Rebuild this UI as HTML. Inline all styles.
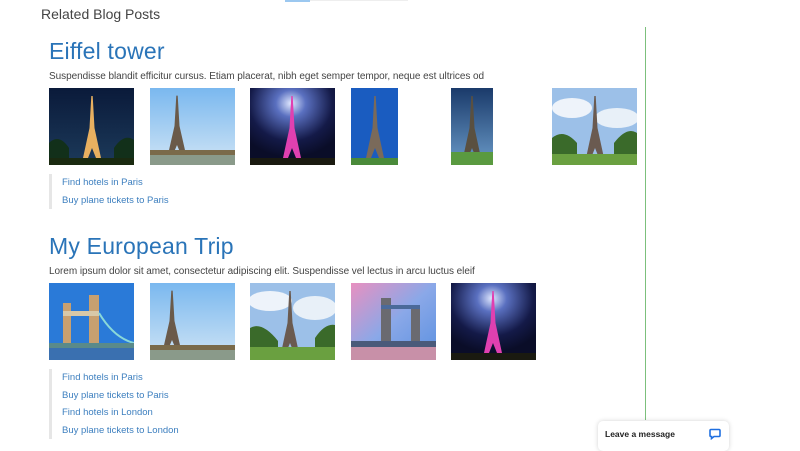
<!DOCTYPE html>
<html><head><meta charset="utf-8"><style>
*{margin:0;padding:0;box-sizing:border-box}
body{width:800px;height:445px;overflow:hidden;background:#fff;font-family:"Liberation Sans",sans-serif;position:relative}
.a{position:absolute}
h2{position:absolute;font-weight:normal;color:#2a74b8;font-size:23px;letter-spacing:.2px}
p{position:absolute;font-size:10px;color:#444;white-space:nowrap;letter-spacing:-.05px}
.img{position:absolute;width:85px;height:77px;overflow:hidden}
.img svg{display:block;width:100%;height:100%}
.links{position:absolute;left:49px;border-left:3px solid #e6e6e6;padding-left:10px}
.links div{font-size:9.5px;color:#3d7fbf;height:17.5px;line-height:17px}
</style></head><body>
<div class="a" style="left:285px;top:0;width:25px;height:2px;background:#9cc8f0"></div>
<div class="a" style="left:310px;top:0;width:98px;height:1px;background:#eee"></div>
<div class="a" style="left:41px;top:6px;font-size:14px;color:#444">Related Blog Posts</div>
<div class="a" style="left:645px;top:27px;width:1px;height:393px;background:#7cc07c"></div>

<h2 style="left:49px;top:38px">Eiffel tower</h2>
<p style="left:49px;top:71px">Suspendisse blandit efficitur cursus. Etiam placerat, nibh eget semper tempor, neque est ultrices od</p>

<svg width="0" height="0" style="position:absolute"><defs>
<g id="tw"><polygon points="42.3,8 43.7,8 45.5,40 52,70 47,70 43,60 39,70 34,70 40.5,40"/></g>
</defs></svg>

<div class="img" style="left:49px;top:88px"><svg viewBox="0 0 85 77"><defs><linearGradient id="n1" x1="0" y1="0" x2="0" y2="1"><stop offset="0" stop-color="#0a1a3a"/><stop offset="1" stop-color="#1c3a5a"/></linearGradient></defs><rect width="85" height="77" fill="url(#n1)"/><path d="M0,55 Q10,45 20,60 L20,77 L0,77Z M65,60 Q75,45 85,52 L85,77 L65,77Z" fill="#12301a"/><rect y="70" width="85" height="7" fill="#1a2a10"/><use href="#tw" fill="#e8b060"/></svg></div>
<div class="img" style="left:150px;top:88px"><svg viewBox="0 0 85 77"><defs><linearGradient id="s1" x1="0" y1="0" x2="0" y2="1"><stop offset="0" stop-color="#7ab8ef"/><stop offset="1" stop-color="#cfe4f5"/></linearGradient></defs><rect width="85" height="77" fill="url(#s1)"/><use href="#tw" fill="#6a5a4a" transform="translate(-16,0) scale(1,.95)"/><rect y="62" width="85" height="5" fill="#7a6a4a"/><rect y="67" width="85" height="10" fill="#8a9a8a"/></svg></div>
<div class="img" style="left:250px;top:88px"><svg viewBox="0 0 85 77"><defs><radialGradient id="r1" cx=".48" cy=".2" r=".7"><stop offset="0" stop-color="#e0e8ff"/><stop offset=".25" stop-color="#5a70c0"/><stop offset=".7" stop-color="#141a48"/><stop offset="1" stop-color="#0a0d28"/></radialGradient></defs><rect width="85" height="77" fill="url(#r1)"/><use href="#tw" fill="#e040b0" transform="translate(-1,0)"/><rect y="70" width="85" height="7" fill="#1a1a10"/></svg></div>
<div class="img" style="left:351px;top:88px;width:47px"><svg viewBox="0 0 47 77" preserveAspectRatio="none"><rect width="47" height="77" fill="#1a5cc0"/><use href="#tw" fill="#7a6a5a" transform="translate(-19,0)"/><rect y="70" width="47" height="7" fill="#4a8a3a"/></svg></div>
<div class="img" style="left:451px;top:88px;width:42px"><svg viewBox="0 0 42 77" preserveAspectRatio="none"><defs><linearGradient id="d1" x1="0" y1="0" x2="0" y2="1"><stop offset="0" stop-color="#1a3a6a"/><stop offset="1" stop-color="#6a9ac8"/></linearGradient></defs><rect width="42" height="77" fill="url(#d1)"/><use href="#tw" fill="#5a5040" transform="translate(-22,0)"/><rect y="64" width="42" height="13" fill="#5a9a40"/></svg></div>
<div class="img" style="left:552px;top:88px"><svg viewBox="0 0 85 77"><rect width="85" height="77" fill="#9cc0e8"/><ellipse cx="20" cy="20" rx="20" ry="10" fill="#eef3fa"/><ellipse cx="65" cy="30" rx="22" ry="10" fill="#e8f0f8"/><use href="#tw" fill="#6a5a50"/><path d="M0,50 Q12,40 25,55 L25,70 L0,70Z M62,55 Q75,38 85,45 L85,70 L62,70Z" fill="#3a6a2a"/><rect y="66" width="85" height="11" fill="#6aa040"/></svg></div>

<div class="links" style="top:174px"><div>Find hotels in Paris</div><div>Buy plane tickets to Paris</div></div>

<h2 style="left:49px;top:233px">My European Trip</h2>
<p style="left:49px;top:266px">Lorem ipsum dolor sit amet, consectetur adipiscing elit. Suspendisse vel lectus in arcu luctus eleif</p>

<div class="img" style="left:49px;top:283px"><svg viewBox="0 0 85 77"><rect width="85" height="77" fill="#2a7ad8"/><rect x="14" y="20" width="8" height="47" fill="#c8a070"/><rect x="40" y="12" width="10" height="55" fill="#c8a070"/><rect x="14" y="28" width="36" height="5" fill="#d8c8a8"/><path d="M50,30 Q65,55 85,60" stroke="#8ad8d8" stroke-width="2" fill="none"/><rect y="60" width="85" height="5" fill="#5a8a8a"/><rect y="65" width="85" height="12" fill="#3a70b0"/></svg></div>
<div class="img" style="left:150px;top:283px"><svg viewBox="0 0 85 77"><rect width="85" height="77" fill="url(#s1)"/><use href="#tw" fill="#6a5a4a" transform="translate(-21,0) scale(1,.95)"/><rect y="62" width="85" height="5" fill="#7a6a4a"/><rect y="67" width="85" height="10" fill="#8a9a8a"/></svg></div>
<div class="img" style="left:250px;top:283px"><svg viewBox="0 0 85 77"><rect width="85" height="77" fill="#9cc0e8"/><ellipse cx="20" cy="18" rx="22" ry="10" fill="#eef3fa"/><ellipse cx="65" cy="25" rx="22" ry="12" fill="#e8f0f8"/><use href="#tw" fill="#6a5a50" transform="translate(-3,0)"/><path d="M0,45 Q12,38 28,58 L28,68 L0,68Z M65,55 Q75,40 85,42 L85,68 L65,68Z" fill="#3a6a2a"/><rect y="64" width="85" height="13" fill="#6aa040"/></svg></div>
<div class="img" style="left:351px;top:283px"><svg viewBox="0 0 85 77"><defs><linearGradient id="p1" x1="0" y1="0" x2="1" y2="1"><stop offset="0" stop-color="#e890c0"/><stop offset=".5" stop-color="#8aa8e8"/><stop offset="1" stop-color="#5a90e0"/></linearGradient></defs><rect width="85" height="77" fill="url(#p1)"/><rect x="30" y="15" width="10" height="45" fill="#6a6a70"/><rect x="60" y="22" width="9" height="38" fill="#6a6a70"/><rect x="30" y="22" width="39" height="4" fill="#4a6a9a"/><rect y="58" width="85" height="6" fill="#4a5a7a"/><rect y="64" width="85" height="13" fill="#c890a8"/></svg></div>
<div class="img" style="left:451px;top:283px"><svg viewBox="0 0 85 77"><rect width="85" height="77" fill="url(#r1)"/><use href="#tw" fill="#e040b0" transform="translate(-1,0)"/><rect y="70" width="85" height="7" fill="#1a1a10"/></svg></div>

<div class="links" style="top:369px"><div>Find hotels in Paris</div><div>Buy plane tickets to Paris</div><div>Find hotels in London</div><div>Buy plane tickets to London</div></div>

<div class="a" style="left:598px;top:421px;width:131px;height:30px;background:#fff;border-radius:5px;box-shadow:0 0 5px rgba(0,0,0,.18)">
<div class="a" style="left:7px;top:8px;font-size:8.5px;font-weight:bold;color:#222">Leave a message</div>
<svg class="a" style="left:111px;top:7px" width="12" height="12" viewBox="0 0 12 12"><path d="M2,1.5 H10 Q11,1.5 11,2.5 V7.5 Q11,8.5 10,8.5 H5 L2.5,10.5 V8.5 H2 Q1,8.5 1,7.5 V2.5 Q1,1.5 2,1.5Z" fill="none" stroke="#1f6fe0" stroke-width="1.6"/></svg>
</div>
</body></html>
